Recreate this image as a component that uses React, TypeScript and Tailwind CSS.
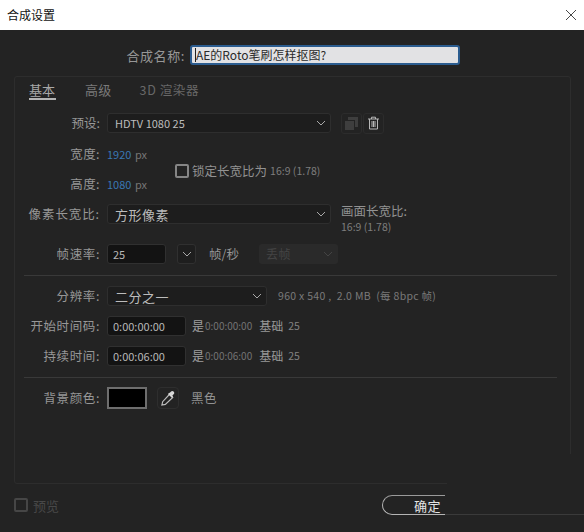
import React from "react";

const Chevron = ({ color = "#a8a8a8" }: { color?: string }) => (
  <svg width="10" height="6" viewBox="0 0 10 6" fill="none" stroke={color} strokeWidth="1">
    <path d="M1 1l4 4 4-4" />
  </svg>
);

const Label = ({ children, className = "" }: { children: React.ReactNode; className?: string }) => (
  <div className={`w-[85px] mr-px text-right text-[12.5px] leading-none text-[#979797] ${className}`}>{children}</div>
);

const Select = ({ text, w, big }: { text: string; w: string; big?: boolean }) => (
  <div className={`${w} h-5 flex items-center justify-between pl-[7px] pr-[4px] bg-[#1d1d1d] border border-[#2e2e2e] rounded-[3px]`}>
    <span className={`${big ? "text-[13px] tracking-[0.5px]" : "text-[11px]"} leading-none text-[#bcbcbc]`}>{text}</span>
    <Chevron />
  </div>
);

const Field = ({ text, w }: { text: string; w: string }) => (
  <div className={`${w} h-5 flex items-center pl-[5px] bg-[#131313] border border-[#303030] rounded-[3px] text-[11px] leading-none text-[#b8b8b8]`}>{text}</div>
);

const TimeRow = ({ label, value, mt }: { label: string; value: string; mt: string }) => (
  <div className={`flex items-center h-5 ${mt}`}>
    <Label className="tracking-[0.6px]">{label}</Label>
    <div className="w-[6px]" />
    <Field text={value} w="w-[79px]" />
    <span className="ml-[6px] text-[12px] leading-none text-[#a0a0a0]">是</span>
    <span className="ml-[1px] text-[10px] leading-none text-[#747474]">{value}</span>
    <span className="ml-[7px] text-[12px] leading-none text-[#989898]">基础</span>
    <span className="ml-[5px] text-[10.5px] leading-none text-[#828282]">25</span>
  </div>
);

export default function App() {
  return (
    <div
      className="relative w-[584px] h-[532px] overflow-hidden bg-[#232323] flex flex-col"
      style={{ fontFamily: '"Noto Sans CJK SC", "Noto Sans", sans-serif' }}
    >
      <div className="h-[30px] shrink-0 bg-white flex items-center justify-between pl-[7px] pr-[7px]">
        <span className="text-[12px] leading-none text-[#111]">合成设置</span>
        <svg width="12" height="12" viewBox="0 0 12 12" stroke="#333" strokeWidth="0.9" fill="none">
          <path d="M1 1l10 10M11 1L1 11" />
        </svg>
      </div>

      <div className="h-[20px] mt-[15px] flex items-center shrink-0">
        <div className="w-[185px] text-right text-[13px] leading-none text-[#979797] tracking-[0.6px]">合成名称:</div>
        <div className="ml-[5px] w-[270px] h-5 flex items-center bg-[#e2e2e4] border-2 border-[#2b5c8f] rounded-[3px] text-[12px] leading-none text-[#2a2a2a]">
          <span className="w-px h-[14px] bg-[#222] ml-[3px]" />
          AE的Roto笔刷怎样抠图?
        </div>
      </div>

      <div className="mt-[11px] ml-[14px] w-[557px] h-[408px] shrink-0 border border-[#2d2d2d] rounded-[3px] flex flex-col">
        <div className="flex h-[23px] mt-[6px] pl-[14px] items-start">
          <div className="w-[27px] h-[17px] border-b-2 border-[#b4b4b4] text-[13px] leading-[13px] text-[#a8a8a8] whitespace-nowrap">基本</div>
          <div className="ml-[29px] text-[13px] leading-[13px] text-[#7a7a7a] whitespace-nowrap tracking-[0.3px]">高级</div>
          <div className="ml-[28px] text-[12.5px] leading-[13px] text-[#686868] whitespace-nowrap tracking-[0.6px]">3D 渲染器</div>
        </div>

        <div className="flex items-center h-5 mt-[7px]">
          <Label>预设:</Label>
          <div className="w-[6px]" />
          <Select text="HDTV 1080 25" w="w-[224px]" />
          <div className="ml-[10px] w-[21px] h-[21px] flex items-center justify-center border border-[#2c2c2c] rounded-[3px]">
            <svg width="15" height="15" viewBox="0 0 15 15" fill="#3e3e3e">
              <path d="M4 1h10v10h-3V4H4z" />
              <path d="M1 5h9v9H1z" />
            </svg>
          </div>
          <div className="ml-px w-[21px] h-[21px] flex items-center justify-center border border-[#2c2c2c] rounded-[3px]">
            <svg width="13" height="14" viewBox="0 0 13 14" fill="none" stroke="#b8b8b8" strokeWidth="1">
              <path d="M1 3h11M4.5 3V1.2h4V3M2.5 3v10h8V3M5 5v6M8 5v6M6.5 5v6" />
            </svg>
          </div>
        </div>

        <div className="flex mt-[11px] h-[60px]">
          <div className="flex flex-col">
            <div className="flex items-center h-[20px]">
              <Label className="tracking-[0.4px]">宽度:</Label>
              <span className="ml-[6px] w-[24px] text-[11px] leading-none text-[#3a78b4]">1920</span>
              <span className="ml-[4px] text-[11px] leading-none text-[#767676]">px</span>
            </div>
            <div className="flex items-center h-[20px] mt-[10px]">
              <Label className="tracking-[0.4px]">高度:</Label>
              <span className="ml-[6px] w-[24px] text-[11px] leading-none text-[#3a78b4]">1080</span>
              <span className="ml-[4px] text-[11px] leading-none text-[#767676]">px</span>
            </div>
          </div>
          <div className="ml-[28px] h-[54px] flex items-center">
            <div className="w-[14px] h-[14px] border-2 border-[#858585] rounded-[2px]" />
            <span className="ml-[3px] text-[12.5px] leading-none text-[#929292] whitespace-nowrap">锁定长宽比为</span>
            <span className="ml-[3px] text-[10.5px] leading-none text-[#7e7e7e] whitespace-nowrap">16:9 (1.78)</span>
          </div>
        </div>

        <div className="flex items-center h-5">
          <Label className="tracking-[0.9px]">像素长宽比:</Label>
          <div className="w-[6px]" />
          <Select text="方形像素" w="w-[224px]" big />
          <div className="ml-[10px] h-5 w-[70px]">
            <div className="mt-px text-[12.5px] leading-none text-[#929292] whitespace-nowrap">画面长宽比:</div>
            <div className="mt-[4px] text-[10.5px] leading-none text-[#7e7e7e] whitespace-nowrap">16:9 (1.78)</div>
          </div>
        </div>

        <div className="flex items-center h-5 mt-[20px]">
          <Label className="tracking-[0.6px]">帧速率:</Label>
          <div className="w-[6px]" />
          <Field text="25" w="w-[59px]" />
          <div className="ml-[11px] w-[19px] h-5 flex items-center justify-center bg-[#1e1e1e] border border-[#303030] rounded-[3px]">
            <Chevron />
          </div>
          <span className="ml-[13px] text-[12.5px] leading-none text-[#969696] whitespace-nowrap">帧/秒</span>
          <div className="ml-[20px] w-[79px] h-5 flex items-center justify-between pl-[7px] pr-[5px] bg-[#2a2a2a] rounded-[3px]">
            <span className="text-[12px] leading-none text-[#444] tracking-[0.5px]">丢帧</span>
            <Chevron color="#444444" />
          </div>
        </div>

        <div className="mt-[11px] ml-[9px] mr-[13px] h-px bg-[#393939]" />

        <div className="flex items-center h-5 mt-[10px]">
          <Label className="tracking-[0.6px]">分辨率:</Label>
          <div className="w-[6px]" />
          <Select text="二分之一" w="w-[160px]" big />
          <span className="ml-[11px] text-[10.5px] leading-none text-[#7a7a7a] whitespace-pre tracking-[0.3px]">960 x 540 ,  2.0 MB  (每 8bpc 帧)</span>
        </div>

        <TimeRow label="开始时间码:" value="0:00:00:00" mt="mt-[10px]" />
        <TimeRow label="持续时间:" value="0:00:06:00" mt="mt-[10px]" />

        <div className="mt-[11px] ml-[9px] mr-[13px] h-px bg-[#393939]" />

        <div className="flex items-center h-[22px] mt-[9px]">
          <Label className="tracking-[0.6px]">背景颜色:</Label>
          <div className="w-[6px]" />
          <div className="w-[40px] h-[22px] bg-black border-2 border-[#6e6e6e]" />
          <div className="ml-[10px] w-[22px] h-[22px] flex items-center justify-center border border-[#2e2e2e] rounded-[4px]">
            <svg width="17" height="17" viewBox="0 0 16 16" fill="none">
              <path d="M9 4L2.5 11 1.8 14.2 5 13.5 12 7z" stroke="#bdbdbd" strokeWidth="1.1" />
              <path d="M9 2.8l1.2-1.2c.7-.8 1.7-.9 2.6-.1s.8 1.9 0 2.6L11.6 5.3l.7.9-1.2 1.2-3.6-3.6 1.2-1.2z" fill="#d8d8d8" />
            </svg>
          </div>
          <span className="ml-[12px] text-[12.5px] leading-none text-[#929292] tracking-[0.5px]">黑色</span>
        </div>
      </div>

      <div className="mt-[11px] flex items-center h-[20px] shrink-0">
        <div className="ml-[14px] w-[14px] h-[14px] border-2 border-[#464646] rounded-[2px]" />
        <span className="ml-[5px] text-[13px] leading-none text-[#484848]">预览</span>
        <div className="ml-[323px] w-[63px] h-[20px] flex items-center justify-end pr-[4px] border-y border-l border-[#b4b4b4] rounded-l-full border-t-[#9a9a9a]">
          <span className="text-[13px] leading-none text-[#e4e4e4] tracking-[0.5px]">确定</span>
        </div>
        <div className="flex-1 h-[20px] border-b border-[#3a3a3a]" />
      </div>

      <div className="absolute left-[447px] top-[454px] w-[137px] h-[36px] bg-[#232323]" />
    </div>
  );
}
